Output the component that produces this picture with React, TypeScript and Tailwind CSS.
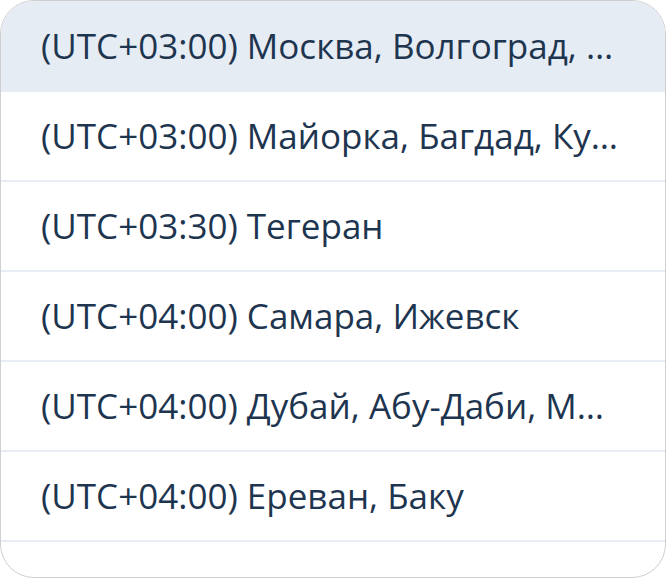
import React from "react";

const ZONES = [
  "(UTC+03:00) Москва, Волгоград, Санкт-Петербург",
  "(UTC+03:00) Майорка, Багдад, Кувейт, Эр-Рияд",
  "(UTC+03:30) Тегеран",
  "(UTC+04:00) Самара, Ижевск",
  "(UTC+04:00) Дубай, Абу-Даби, Маскат",
  "(UTC+04:00) Ереван, Баку",
];

export default function App() {
  return (
    <div className="w-[666px] h-[578px] bg-white">
      <ul
        className="h-[578px] overflow-hidden rounded-[34px] border border-[#cfcfcf] bg-white pt-px"
        style={{ fontFamily: '"Open Sans", "Noto Sans", sans-serif' }}
      >
        {ZONES.map((z, i) => (
          <li
            key={z}
            className={
              i === 0
                ? "-mt-px flex h-[91px] items-center border-b border-[#e6ecf4] bg-[#e6ecf4] pl-[40px] pr-[42px]"
                : "flex h-[90px] items-center border-b-2 border-[#e8edf5] bg-white pl-[40px] pr-[42px]"
            }
          >
            <span className="truncate text-[35px] text-[#1e3550]">{z}</span>
          </li>
        ))}
      </ul>
    </div>
  );
}
